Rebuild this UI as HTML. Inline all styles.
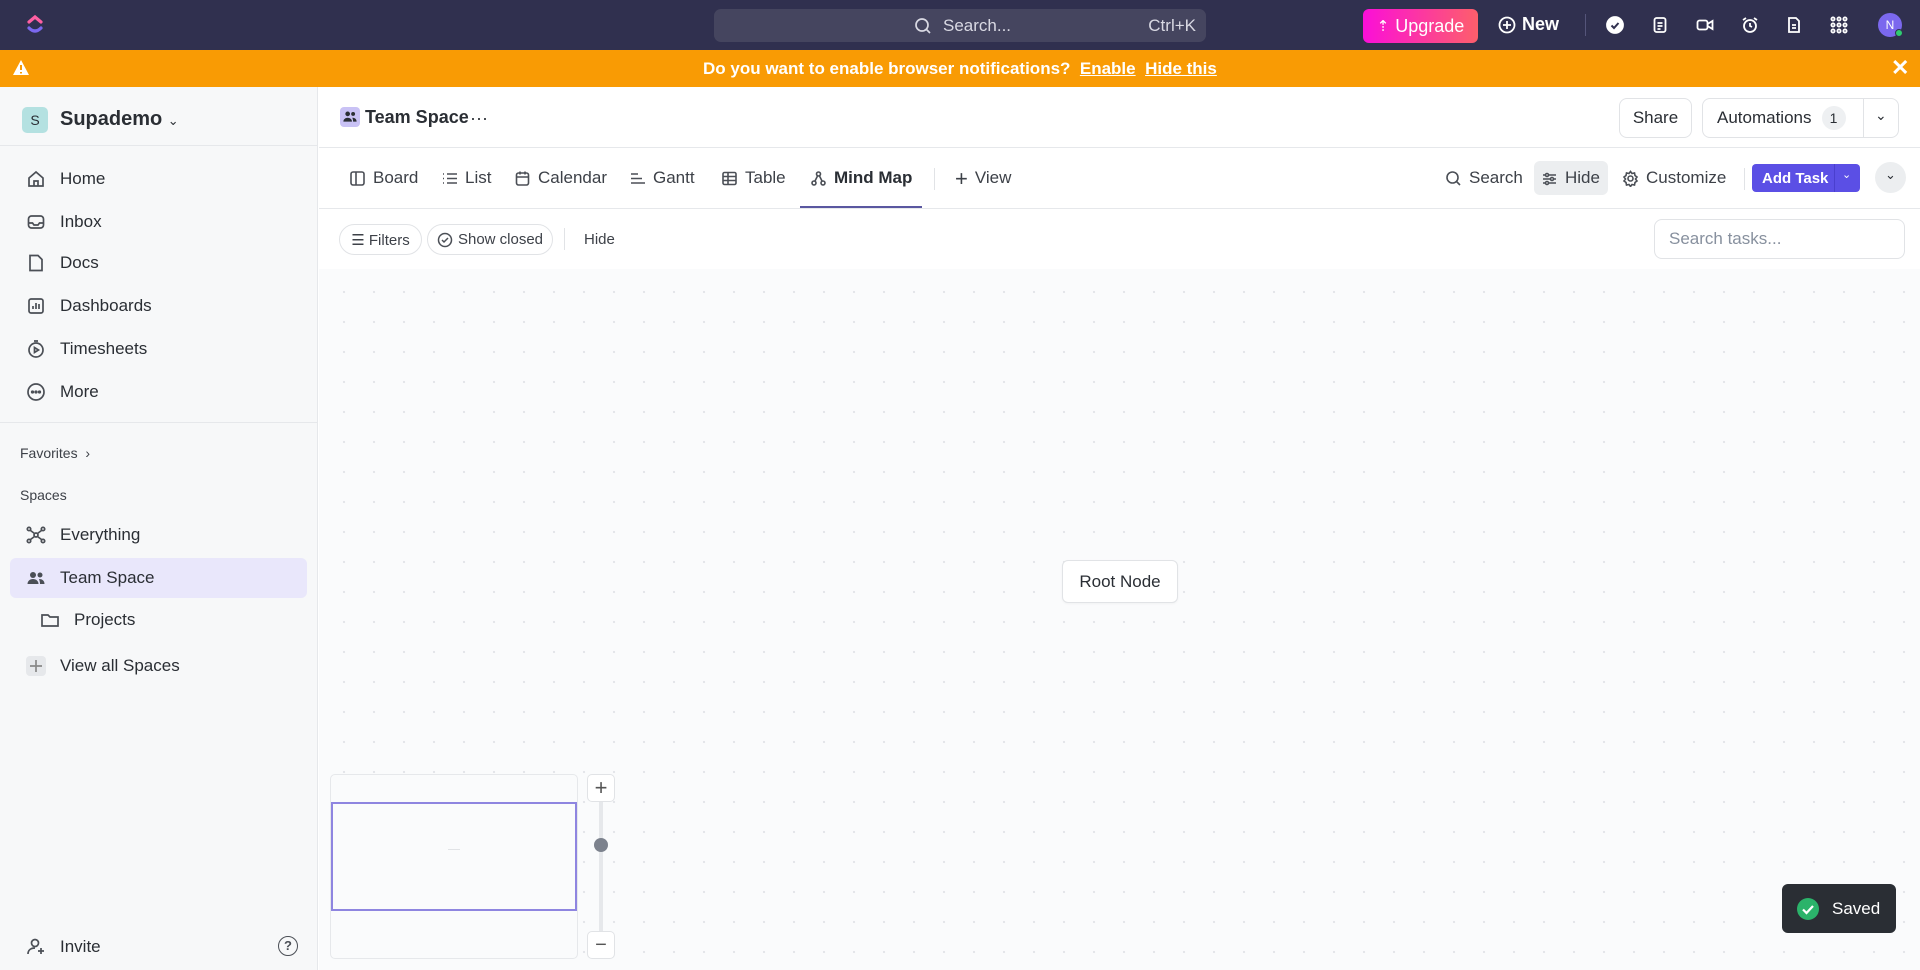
<!DOCTYPE html>
<html><head><meta charset="utf-8"><style>
*{box-sizing:border-box;margin:0;padding:0}
body{width:1920px;height:970px;overflow:hidden;font-family:"Liberation Sans",sans-serif;color:#2a2e34;background:#fff;position:relative}
.abs{position:absolute}
.top{left:0;top:0;width:1920px;height:50px;background:#30304f}
.banner{left:0;top:50px;width:1920px;height:37px;background:#f99b04;color:#fff;font-weight:bold;font-size:17px}
.side{left:0;top:87px;width:318px;height:883px;background:#f7f8f9;border-right:1px solid #e6e8eb}
.si{position:absolute;left:26px;font-size:17px;color:#2a2e34;display:flex;align-items:center;gap:14px;height:24px}
.si svg{width:20px;height:20px;fill:none;stroke:#4b4f56;stroke-width:1.7}
.canvas{left:319px;top:269px;width:1601px;height:701px;background-color:#fafbfc;background-image:radial-gradient(circle,#e4e6ea 1.1px,transparent 1.3px);background-size:30px 30px;background-position:10px 8px}
.tab{position:absolute;top:168px;font-size:17px;color:#3d4148;display:flex;align-items:center;gap:7px}
.tab svg{width:17px;height:17px;fill:none;stroke:#4b4f56;stroke-width:1.6}
.btn{position:absolute;border:1px solid #e1e3e6;border-radius:8px;background:#fff;font-size:17px;display:flex;align-items:center;justify-content:center;color:#2a2e34}
.ico{position:absolute;top:16px;width:18px;height:18px;fill:none;stroke:#fff;stroke-width:1.8}
</style></head><body>
<div class="abs top">
  <svg class="abs" style="left:25px;top:13px" width="20" height="24" viewBox="0 0 20 24"><path d="M4 9 L10 4 L16 9" stroke="#ff5fa2" stroke-width="3.2" fill="none" stroke-linecap="round"/><path d="M4 15 Q10 21 16 15" stroke="#7b68ee" stroke-width="3.2" fill="none" stroke-linecap="round"/></svg>
  <div class="abs" style="left:714px;top:9px;width:492px;height:33px;background:#45455f;border-radius:7px;color:#d9d9e3;font-size:17px">
    <svg class="abs" style="left:200px;top:8px" width="18" height="18" viewBox="0 0 18 18" fill="none" stroke="#d9d9e3" stroke-width="1.7"><circle cx="8" cy="8" r="6"/><path d="M12.5 12.5 L16 16"/></svg>
    <span class="abs" style="left:229px;top:7px">Search...</span>
    <span class="abs" style="right:10px;top:7px">Ctrl+K</span>
  </div>
  <div class="abs" style="left:1363px;top:9px;width:115px;height:34px;border-radius:6px;background:linear-gradient(90deg,#fb0fd8,#fd5f6b);color:#fff;font-size:18px;display:flex;align-items:center;justify-content:center;gap:6px"><span style="font-size:15px">⇡</span>Upgrade</div>
  <div class="abs" style="left:1498px;top:14px;color:#fff;font-size:18px;font-weight:bold;display:flex;align-items:center;gap:6px"><svg width="18" height="18" viewBox="0 0 18 18" fill="none" stroke="#fff" stroke-width="1.8"><circle cx="9" cy="9" r="7.5"/><path d="M9 5v8M5 9h8"/></svg>New</div>
  <div class="abs" style="left:1585px;top:14px;width:1px;height:22px;background:#55557a"></div>
  <svg class="ico" style="left:1606px" viewBox="0 0 18 18"><circle cx="9" cy="9" r="8" fill="#fff"/><path d="M5.5 9.5l2.5 2.5 4.5-5" stroke="#30304f" stroke-width="2"/></svg>
  <svg class="ico" style="left:1651px" viewBox="0 0 18 18"><rect x="3.5" y="2" width="11" height="14" rx="2"/><path d="M6.5 7h5M6.5 10h5M6.5 13h3"/></svg>
  <svg class="ico" style="left:1696px" viewBox="0 0 18 18"><rect x="1.5" y="4.5" width="10" height="9" rx="2"/><path d="M11.5 8l5-3v8l-5-3"/></svg>
  <svg class="ico" style="left:1741px" viewBox="0 0 18 18"><circle cx="9" cy="10" r="6"/><path d="M9 7v3l2 1M2 4l3-2M16 4l-3-2"/></svg>
  <svg class="ico" style="left:1785px" viewBox="0 0 18 18"><path d="M4 2h7l3 3v11H4z"/><path d="M7 9h4M7 12h4"/></svg>
  <svg class="ico" style="left:1830px" viewBox="0 0 18 18" fill="#fff" stroke="none"><circle cx="3" cy="3" r="1.6"/><circle cx="9" cy="3" r="1.6"/><circle cx="15" cy="3" r="1.6"/><circle cx="3" cy="9" r="1.6"/><circle cx="9" cy="9" r="1.6"/><circle cx="15" cy="9" r="1.6"/><circle cx="3" cy="15" r="1.6"/><circle cx="9" cy="15" r="1.6"/><circle cx="15" cy="15" r="1.6"/></svg>
  <div class="abs" style="left:1878px;top:13px;width:24px;height:24px;border-radius:50%;background:#7b68ee;color:#fff;font-size:12px;display:flex;align-items:center;justify-content:center">N</div>
  <div class="abs" style="left:1895px;top:29px;width:8px;height:8px;border-radius:50%;background:#2ecc71;border:1px solid #30304f"></div>
</div>
<div class="abs banner">
  <svg class="abs" style="left:12px;top:9px" width="18" height="17" viewBox="0 0 18 17"><path d="M9 1L17 16H1z" fill="#fff"/><path d="M9 6v5M9 13v1.5" stroke="#f99b04" stroke-width="2"/></svg>
  <div class="abs" style="left:703px;top:9px;white-space:nowrap">Do you want to enable browser notifications? &nbsp;<u>Enable</u>&nbsp; <u>Hide this</u></div>
  <div class="abs" style="left:1891px;top:5px;font-size:22px">✕</div>
</div>
<div class="abs side">
  <div class="abs" style="left:22px;top:20px;width:26px;height:26px;border-radius:5px;background:#b4e1e1;color:#2a2e34;font-size:14px;display:flex;align-items:center;justify-content:center">S</div>
  <div class="abs" style="left:60px;top:21px;font-size:20px;font-weight:bold;color:#2a2e34">Supademo <span style="font-size:13px;font-weight:normal">⌄</span></div>
  <div class="abs" style="left:0;top:58px;width:318px;height:1px;background:#e6e8eb"></div>
  <div class="si" style="top:80px"><svg viewBox="0 0 20 20"><path d="M3 9l7-6 7 6v8H3z"/><path d="M8 17v-5h4v5"/></svg>Home</div>
  <div class="si" style="top:123px"><svg viewBox="0 0 20 20"><rect x="2.5" y="4" width="15" height="12" rx="3"/><path d="M2.5 11h4l1.5 2h4l1.5-2h4"/></svg>Inbox</div>
  <div class="si" style="top:164px"><svg viewBox="0 0 20 20"><path d="M4 2.5h8l4 4v11H4z"/></svg>Docs</div>
  <div class="si" style="top:207px"><svg viewBox="0 0 20 20"><rect x="3" y="3" width="14" height="14" rx="2"/><path d="M7 13v-3M10 13V7M13 13v-5"/></svg>Dashboards</div>
  <div class="si" style="top:250px"><svg viewBox="0 0 20 20"><circle cx="10" cy="11" r="7"/><path d="M8 2h4M8.5 8.5v5l4-2.5z"/></svg>Timesheets</div>
  <div class="si" style="top:293px"><svg viewBox="0 0 20 20"><circle cx="10" cy="10" r="8"/><circle cx="6.5" cy="10" r=".8"/><circle cx="10" cy="10" r=".8"/><circle cx="13.5" cy="10" r=".8"/></svg>More</div>
  <div class="abs" style="left:0;top:335px;width:318px;height:1px;background:#e6e8eb"></div>
  <div class="abs" style="left:20px;top:358px;font-size:14px;color:#3d4148">Favorites &nbsp;›</div>
  <div class="abs" style="left:20px;top:400px;font-size:14px;color:#3d4148">Spaces</div>
  <div class="si" style="top:436px"><svg viewBox="0 0 20 20"><circle cx="10" cy="10" r="2"/><circle cx="3" cy="4" r="1.7"/><circle cx="17" cy="4" r="1.7"/><circle cx="3" cy="16" r="1.7"/><circle cx="17" cy="16" r="1.7"/><path d="M4.5 5.5l4 3M15.5 5.5l-4 3M4.5 14.5l4-3M15.5 14.5l-4-3"/></svg>Everything</div>
  <div class="abs" style="left:10px;top:471px;width:297px;height:40px;background:#e9e7fb;border-radius:6px"></div>
  <div class="si" style="top:479px"><svg viewBox="0 0 20 20" style="fill:#4b4f56;stroke:none"><circle cx="7" cy="7" r="3"/><circle cx="14" cy="7" r="2.5"/><path d="M1.5 16c0-3 2.5-5 5.5-5s5.5 2 5.5 5z"/><path d="M13 11c3 0 5.5 1.5 5.5 5h-4.5c0-2-.5-3.5-1-5z"/></svg>Team Space</div>
  <div class="si" style="top:521px;left:40px"><svg viewBox="0 0 20 20"><path d="M2 5h6l2 2h8v9H2z"/></svg>Projects</div>
  <div class="si" style="top:567px"><svg viewBox="0 0 20 20" style="stroke:#888"><rect x="0" y="0" width="20" height="20" rx="4" fill="#e6e8eb" stroke="none"/><path d="M10 4v12M4 10h12"/></svg>View all Spaces</div>
  <div class="si" style="top:848px"><svg viewBox="0 0 20 20"><circle cx="9" cy="6" r="3.5"/><path d="M2 17c0-4 3-6 7-6"/><path d="M15 11v6M12 14h6"/></svg>Invite</div>
  <div class="abs" style="left:278px;top:849px;width:20px;height:20px;border:1.7px solid #4b4f56;border-radius:50%;font-size:13px;text-align:center;line-height:17px;font-weight:bold;color:#4b4f56">?</div>
</div>

<div class="abs" style="left:319px;top:147px;width:1601px;height:1px;background:#e6e8eb"></div>
<div class="abs" style="left:319px;top:208px;width:1601px;height:1px;background:#e6e8eb"></div>
<div class="abs" style="left:340px;top:107px;width:20px;height:20px;border-radius:4px;background:#c9c2f5"></div>
<svg class="abs" style="left:342px;top:110px" width="16" height="14" viewBox="0 0 20 18" fill="#2a2e34"><circle cx="7" cy="5" r="3"/><circle cx="14" cy="5" r="2.5"/><path d="M1.5 15c0-3 2.5-5 5.5-5s5.5 2 5.5 5z"/><path d="M13 10c3 0 5.5 1.5 5.5 5h-4.5c0-2-.5-3.5-1-5z"/></svg>
<div class="abs" style="left:365px;top:107px;font-size:18px;font-weight:bold">Team Space</div>
<div class="abs" style="left:470px;top:108px;font-size:18px">···</div>
<div class="btn" style="left:1619px;top:98px;width:73px;height:40px">Share</div>
<div class="btn" style="left:1702px;top:98px;width:197px;height:40px;justify-content:flex-start;padding-left:14px">Automations <span style="display:inline-block;margin-left:10px;width:24px;height:24px;border-radius:50%;background:#eef0f2;font-size:14px;text-align:center;line-height:24px">1</span><span style="position:absolute;left:160px;top:0;width:1px;height:38px;background:#e1e3e6"></span><span style="position:absolute;left:172px;top:8px;font-size:14px">⌄</span></div>

<div class="tab" style="left:349px"><svg viewBox="0 0 17 17"><rect x="2" y="2" width="13" height="13" rx="2"/><path d="M7 2v13"/></svg>Board</div>
<div class="tab" style="left:441px"><svg viewBox="0 0 17 17"><path d="M6 4h10M6 8.5h10M6 13h10M2 4h1M2 8.5h1M2 13h1"/></svg>List</div>
<div class="tab" style="left:514px"><svg viewBox="0 0 17 17"><rect x="2.5" y="3" width="12" height="12" rx="2"/><path d="M2.5 7h12M6 1.5v3M11 1.5v3"/></svg>Calendar</div>
<div class="tab" style="left:629px"><svg viewBox="0 0 17 17"><path d="M2 4h7M2 8.5h11M2 13h14"/></svg>Gantt</div>
<div class="tab" style="left:721px"><svg viewBox="0 0 17 17"><rect x="2" y="2.5" width="13" height="12" rx="1.5"/><path d="M2 6.5h13M2 10.5h13M7 2.5v12"/></svg>Table</div>
<div class="tab" style="left:810px;color:#2a2e34;font-weight:bold"><svg viewBox="0 0 17 17"><circle cx="8.5" cy="4" r="2"/><circle cx="4" cy="13" r="2"/><circle cx="13" cy="13" r="2"/><path d="M7.5 6l-2.5 5M9.5 6l2.5 5"/></svg>Mind Map</div>
<div class="abs" style="left:800px;top:206px;width:122px;height:2px;background:#5a57a0"></div>
<div class="abs" style="left:934px;top:168px;width:1px;height:22px;background:#e1e3e6"></div>
<div class="tab" style="left:955px"><span style="font-size:22px;line-height:17px">+</span>View</div>
<div class="tab" style="left:1445px"><svg viewBox="0 0 17 17"><circle cx="7.5" cy="7.5" r="5.5"/><path d="M11.5 11.5L15 15"/></svg>Search</div>
<div class="abs" style="left:1534px;top:161px;width:74px;height:34px;background:#eceef0;border-radius:6px"></div>
<div class="tab" style="left:1541px"><svg viewBox="0 0 17 17"><path d="M2 5h13M2 9h13M2 13h13"/><circle cx="6" cy="5" r="1.5" fill="#fff"/><circle cx="11" cy="9" r="1.5" fill="#fff"/><circle cx="6" cy="13" r="1.5" fill="#fff"/></svg>Hide</div>
<div class="tab" style="left:1622px"><svg viewBox="0 0 17 17"><circle cx="8.5" cy="8.5" r="2.5"/><path d="M8.5 1.5l1.5 2 2.5-.5.5 2.5 2 1.5-1.5 2 1.5 2-2 1.5-.5 2.5-2.5-.5-1.5 2-1.5-2-2.5.5-.5-2.5-2-1.5 1.5-2-1.5-2 2-1.5.5-2.5 2.5.5z"/></svg>Customize</div>
<div class="abs" style="left:1744px;top:168px;width:1px;height:22px;background:#e1e3e6"></div>
<div class="abs" style="left:1752px;top:164px;width:108px;height:28px;background:#5b4fe5;border-radius:4px;color:#fff;font-size:15px;font-weight:bold;padding:6px 0 0 10px">Add Task<span style="position:absolute;left:82px;top:0;width:1px;height:28px;background:#4a3fce"></span><span style="position:absolute;left:90px;top:4px;font-size:11px;font-weight:normal">⌄</span></div>
<div class="abs" style="left:1875px;top:162px;width:31px;height:31px;border-radius:50%;background:#eceef0;text-align:center;font-size:13px;line-height:26px">⌄</div>

<div class="btn" style="left:339px;top:224px;width:83px;height:31px;border-radius:16px;font-size:15px;color:#3d4148">☰&nbsp;Filters</div>
<div class="btn" style="left:427px;top:224px;width:126px;height:31px;border-radius:16px;font-size:15px;color:#3d4148"><svg width="16" height="16" viewBox="0 0 16 16" fill="none" stroke="#4b4f56" stroke-width="1.5" style="margin-right:5px"><circle cx="8" cy="8" r="6.5"/><path d="M5 8l2 2 4-4"/></svg>Show closed</div>
<div class="abs" style="left:564px;top:228px;width:1px;height:22px;background:#e1e3e6"></div>
<div class="abs" style="left:584px;top:231px;font-size:15px;color:#3d4148">Hide</div>
<div class="btn" style="left:1654px;top:219px;width:251px;height:40px;justify-content:flex-start;padding-left:14px;color:#87909e;font-size:17px">Search tasks...</div>

<div class="abs canvas"></div>
<div class="abs" style="left:1062px;top:560px;width:116px;height:43px;background:#fff;border:1px solid #e1e3e6;border-radius:6px;font-size:17px;display:flex;align-items:center;justify-content:center;box-shadow:0 1px 2px rgba(0,0,0,.04)">Root Node</div>
<div class="abs" style="left:330px;top:774px;width:248px;height:185px;background:#fafbfc;border:1px solid #e6e8eb;border-radius:5px"></div>
<div class="abs" style="left:331px;top:802px;width:246px;height:109px;border:2px solid #8e85e0"></div>
<div class="abs" style="left:448px;top:849px;width:12px;height:1px;background:#e1e3e6"></div>
<div class="abs" style="left:599px;top:800px;width:4px;height:135px;background:#e6e8eb"></div>
<div class="btn" style="left:587px;top:774px;width:28px;height:28px;border-radius:5px;font-size:22px;color:#555">+</div>
<div class="btn" style="left:587px;top:931px;width:28px;height:28px;border-radius:5px;font-size:20px;color:#555">−</div>
<div class="abs" style="left:594px;top:838px;width:14px;height:14px;border-radius:50%;background:#7c828d"></div>
<div class="abs" style="left:1782px;top:884px;width:114px;height:49px;background:#2a2e34;border-radius:6px;color:#fff;font-size:17px;display:flex;align-items:center;padding-left:14px;gap:12px"><svg width="24" height="24" viewBox="0 0 24 24"><circle cx="12" cy="12" r="11" fill="#2bb36a"/><path d="M7 12.5l3.5 3.5 6.5-7" fill="none" stroke="#fff" stroke-width="2.2"/></svg>Saved</div>
</body></html>
